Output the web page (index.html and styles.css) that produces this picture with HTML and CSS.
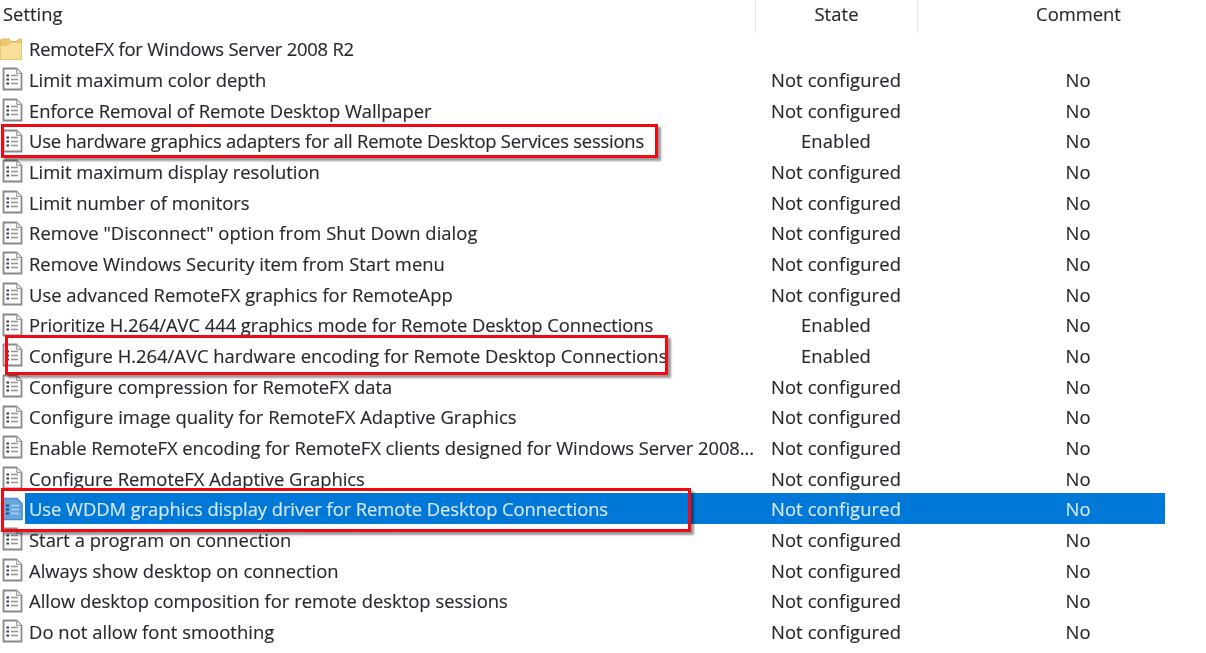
FILE: index.html
```html
<!DOCTYPE html>
<html lang="en">
<head>
<meta charset="utf-8">
<title>Remote Session Environment policy settings</title>
<link rel="stylesheet" href="styles.css">
</head>
<body>
<svg class="defs" width="0" height="0" aria-hidden="true">
  <symbol id="doc" viewBox="0 0 22 24">
    <path d="M2.5 1.5H15.5L20.5 6.5V22.5H2.5Z" fill="#fbfbfb" stroke="#8a8a8a" stroke-width="1.8"/>
    <path d="M15.5 1.5V6.5H20.5" fill="#e4e4e4" stroke="#a0a0a0"/>
    <path d="M10 8.5H17M10 12.5H17M10 16.5H17" stroke="#959595" stroke-width="1.3"/>
    <path d="M5.5 8.5H8M5.5 12.5H8M5.5 16.5H8" stroke="#2e3a48" stroke-width="2"/>
  </symbol>
  <symbol id="doc-sel" viewBox="0 0 22 24">
    <path d="M1.5 1.5H16L21 6.5V22.5H1.5Z" fill="#68a6dc" stroke="#4a90d0" stroke-width="1.6"/>
    <path d="M10 8.5H18M10 12.5H18M10 16.5H18" stroke="#a9cfee" stroke-width="1.3"/>
    <path d="M5 8.5H8M5 12.5H8M5 16.5H8" stroke="#1d4f80" stroke-width="2"/>
  </symbol>
  <symbol id="folder" viewBox="0 0 22 22">
    <path d="M.5 6.5V2.5Q.5 1 2 1H9L11 3.5H16L19 1H21.5V21.5H.5Z" fill="#e9c871" stroke="#dcb95f"/>
    <path d="M.5 7.5L8 7.5L11 4.5H21.5V21.5H.5Z" fill="#f8e09a" stroke="#e6c671"/>
  </symbol>
</svg>
<main class="list">
  <header class="row head">
    <div class="name">Setting</div>
    <div class="state sep">State</div>
    <div class="comment sep">Comment</div>
  </header>
  <div class="row"><svg class="icon folder"><use href="#folder"/></svg><div class="name tighter">RemoteFX for Windows Server 2008 R2</div></div>
  <div class="row"><svg class="icon"><use href="#doc"/></svg><div class="name">Limit maximum color depth</div><div class="state">Not configured</div><div class="comment">No</div></div>
  <div class="row"><svg class="icon"><use href="#doc"/></svg><div class="name tight">Enforce Removal of Remote Desktop Wallpaper</div><div class="state">Not configured</div><div class="comment">No</div></div>
  <div class="row"><svg class="icon"><use href="#doc"/></svg><div class="name tighter">Use hardware graphics adapters for all Remote Desktop Services sessions</div><div class="state">Enabled</div><div class="comment">No</div></div>
  <div class="row"><svg class="icon"><use href="#doc"/></svg><div class="name">Limit maximum display resolution</div><div class="state">Not configured</div><div class="comment">No</div></div>
  <div class="row"><svg class="icon"><use href="#doc"/></svg><div class="name">Limit number of monitors</div><div class="state">Not configured</div><div class="comment">No</div></div>
  <div class="row"><svg class="icon"><use href="#doc"/></svg><div class="name wide">Remove "Disconnect" option from Shut Down dialog</div><div class="state">Not configured</div><div class="comment">No</div></div>
  <div class="row"><svg class="icon"><use href="#doc"/></svg><div class="name">Remove Windows Security item from Start menu</div><div class="state">Not configured</div><div class="comment">No</div></div>
  <div class="row"><svg class="icon"><use href="#doc"/></svg><div class="name">Use advanced RemoteFX graphics for RemoteApp</div><div class="state">Not configured</div><div class="comment">No</div></div>
  <div class="row"><svg class="icon"><use href="#doc"/></svg><div class="name tight">Prioritize H.264/AVC 444 graphics mode for Remote Desktop Connections</div><div class="state">Enabled</div><div class="comment">No</div></div>
  <div class="row"><svg class="icon"><use href="#doc"/></svg><div class="name">Configure H.264/AVC hardware encoding for Remote Desktop Connections</div><div class="state">Enabled</div><div class="comment">No</div></div>
  <div class="row"><svg class="icon"><use href="#doc"/></svg><div class="name">Configure compression for RemoteFX data</div><div class="state">Not configured</div><div class="comment">No</div></div>
  <div class="row"><svg class="icon"><use href="#doc"/></svg><div class="name wide">Configure image quality for RemoteFX Adaptive Graphics</div><div class="state">Not configured</div><div class="comment">No</div></div>
  <div class="row"><svg class="icon"><use href="#doc"/></svg><div class="name tight">Enable RemoteFX encoding for RemoteFX clients designed for Windows Server 2008...</div><div class="state">Not configured</div><div class="comment">No</div></div>
  <div class="row"><svg class="icon"><use href="#doc"/></svg><div class="name">Configure RemoteFX Adaptive Graphics</div><div class="state">Not configured</div><div class="comment">No</div></div>
  <div class="row selected"><svg class="icon"><use href="#doc-sel"/></svg><div class="name tight">Use WDDM graphics display driver for Remote Desktop Connections</div><div class="state">Not configured</div><div class="comment">No</div></div>
  <div class="row"><svg class="icon"><use href="#doc"/></svg><div class="name">Start a program on connection</div><div class="state">Not configured</div><div class="comment">No</div></div>
  <div class="row"><svg class="icon"><use href="#doc"/></svg><div class="name">Always show desktop on connection</div><div class="state">Not configured</div><div class="comment">No</div></div>
  <div class="row"><svg class="icon"><use href="#doc"/></svg><div class="name">Allow desktop composition for remote desktop sessions</div><div class="state">Not configured</div><div class="comment">No</div></div>
  <div class="row"><svg class="icon"><use href="#doc"/></svg><div class="name wide">Do not allow font smoothing</div><div class="state">Not configured</div><div class="comment">No</div></div>
</main>
<div class="mark mark-a"></div>
<div class="mark mark-b"></div>
<div class="mark mark-c"></div>
</body>
</html>
```
FILE: styles.css
```css
html, body {
  margin: 0;
  padding: 0;
  height: 653px;
  overflow: hidden;
  background: #fff;
}
.defs { position: absolute; }
.list {
  width: 1165px;
  font-family: "Open Sans", "Noto Sans", sans-serif;
  font-size: 18.4px;
  color: #26292e;
  -webkit-text-stroke: 0.15px;
  display: flex;
  flex-direction: column;
  filter: blur(0.6px);
}
.row {
  display: flex;
  align-items: center;
  height: 30.68px;
  flex: none;
  position: relative;
}
.head {
  height: 33.4px;
  align-items: stretch;
}
.head > div { line-height: 28px; }
.head .name { padding-left: 3px; width: 752px; flex: none; }
.icon {
  width: 22px;
  height: 24px;
  margin-left: 1px;
  flex: none;
}
.folder { height: 22px; margin-left: 0; margin-right: 1px; }
.name {
  width: 726px;
  padding-left: 6px;
  white-space: nowrap;
  flex: none;
}
.tight { letter-spacing: -0.06px; }
.tighter { letter-spacing: -0.22px; }
.wide { letter-spacing: 0.05px; }
.state {
  width: 162px;
  text-align: center;
  letter-spacing: 0.1px;
  flex: none;
}
.comment {
  width: 174px;
  margin-left: 74px;
  text-align: center;
  flex: none;
}
.head .comment { margin-left: 0; padding-left: 74px; width: 248px; }
.sep { border-left: 1px solid #e6e6e6; box-sizing: border-box; }
.selected { color: #d6e8f8; }
.selected::before {
  content: "";
  position: absolute;
  left: 25px;
  right: 0;
  top: 0;
  bottom: 0;
  background: #0078d7;
  z-index: -1;
}
.mark {
  position: absolute;
  border: 3px solid #f10a14;
  box-shadow: 3px 3px 2px rgba(0,0,0,.4);
  box-sizing: border-box;
  filter: blur(0.3px);
}
.mark-a { left: 1px; top: 124px; width: 657px; height: 34px; }
.mark-b { left: 5px; top: 335px; width: 663px; height: 40px; }
.mark-c { left: 1px; top: 488px; width: 690px; height: 44px; }
```
